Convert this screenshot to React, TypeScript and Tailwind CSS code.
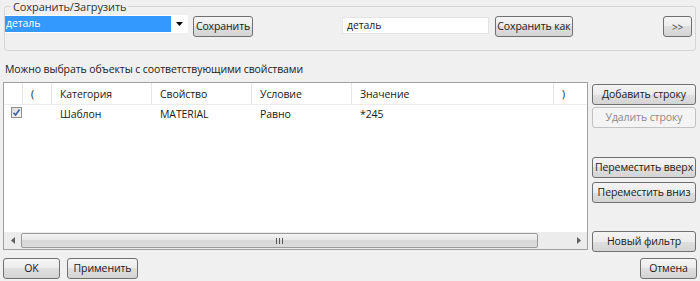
import React from "react";

const btn =
    "flex items-center justify-center whitespace-nowrap h-[21px] border border-[#707070] rounded-[3px] bg-[linear-gradient(#f4f4f4_0%,#ececec_50%,#dfdfdf_50%,#d4d4d4_100%)] text-[#1a1a1a] leading-none";

const columns = [
    { w: "w-[19px]", label: "" },
    { w: "w-[29px]", label: "(" },
    { w: "w-[100px]", label: "Категория" },
    { w: "w-[100px]", label: "Свойство" },
    { w: "w-[100px]", label: "Условие" },
    { w: "w-[202px]", label: "Значение" },
    { w: "w-[33px]", label: ")" },
];

const CheckBox = () => (
    <div className="w-[11px] h-[11px] border border-[#8f8f8f] bg-[linear-gradient(135deg,#dcdcdc,#f6f6f6)] flex items-center justify-center">
        <svg width="9" height="9" viewBox="0 0 9 9">
            <path d="M1.5 4.8 L3.6 7 L7.5 1.5" stroke="#3b5ea8" strokeWidth="1.6" fill="none" />
        </svg>
    </div>
);

const App = () => {
    return (
        <div className="w-[700px] h-[281px] bg-[#f0f0f0] overflow-hidden text-[10.5px] tracking-[-0.1px] text-[#1a1a1a] font-['Open_Sans',sans-serif]">
            <fieldset className="mx-[4px] w-[692px] h-[51px] border border-[#d5d5d5] rounded-[3px]">
                <legend className="ml-[6px] px-[2px] leading-[13px] text-[11px] text-[#333]">Сохранить/Загрузить</legend>
                <div className="flex items-start mt-[2px]">
                    <div className="w-[183px] h-[18px] bg-white flex items-center">
                        <div className="w-[166px] h-[16px] bg-[#3399ff] text-white flex items-center pl-[1px]">деталь</div>
                        <div className="flex-1 flex items-center justify-center">
                            <svg width="7" height="4" viewBox="0 0 7 4">
                                <path d="M0 0 L7 0 L3.5 4 Z" fill="#000" />
                            </svg>
                        </div>
                    </div>
                    <button className={`${btn} ml-[5px] mt-[1px] w-[60px]`}>Сохранить</button>
                    <div className="ml-[89px] mt-[2px] w-[147px] h-[17px] bg-white border border-[#e3e3e3] flex items-center pl-[4px]">деталь</div>
                    <button className={`${btn} ml-[6px] mt-[1px] w-[78px]`}>Сохранить как</button>
                    <button className={`${btn} ml-[90px] mt-[1px] w-[29px] text-[10px] text-[#444]`}>&gt;&gt;</button>
                </div>
            </fieldset>

            <div className="h-[31px] pt-[10px] pl-[5px] leading-[16px]">Можно выбрать объекты с соответствующими свойствами</div>

            <div className="flex h-[171px]">
                <div className="ml-[3px] w-[585px] h-[168px] border border-[#a0a0a0] bg-white flex flex-col">
                    <div className="flex h-[22px] border-b border-[#ececec]">
                        {columns.map((c, i) => (
                            <div key={i} className={`${c.w} h-full flex items-center pl-[8px] pt-[2px] ${i < columns.length - 1 ? "border-r border-[#e3e6ea]" : ""}`}>
                                {c.label}
                            </div>
                        ))}
                    </div>
                    <div className="flex h-[19px] items-center">
                        <div className="w-[19px] h-full flex items-start pt-[2px] pl-[7px]">
                            <CheckBox />
                        </div>
                        <div className="w-[29px]"></div>
                        <div className="w-[100px] pl-[8px]">Шаблон</div>
                        <div className="w-[100px] pl-[8px]">MATERIAL</div>
                        <div className="w-[100px] pl-[8px]">Равно</div>
                        <div className="w-[202px] pl-[8px]">*245</div>
                    </div>
                    <div className="flex-1"></div>
                    <div className="flex h-[17px] bg-[#ececec]">
                        <div className="w-[17px] flex items-center justify-center">
                            <svg width="4" height="7" viewBox="0 0 4 7">
                                <path d="M4 0 L0 3.5 L4 7 Z" fill="#606060" />
                            </svg>
                        </div>
                        <div className="flex-1 py-[1px]">
                            <div className="w-[517px] h-full border border-[#9a9a9a] rounded-[2px] bg-[linear-gradient(#f4f4f4,#e6e6e6_50%,#d8d8d8_50%,#dcdcdc)] flex items-center justify-center">
                                <div className="flex gap-[2px]">
                                    <div className="w-[1px] h-[6px] bg-[#555]"></div>
                                    <div className="w-[1px] h-[6px] bg-[#555]"></div>
                                    <div className="w-[1px] h-[6px] bg-[#555]"></div>
                                </div>
                            </div>
                        </div>
                        <div className="w-[17px] flex items-center justify-center">
                            <svg width="4" height="7" viewBox="0 0 4 7">
                                <path d="M0 0 L4 3.5 L0 7 Z" fill="#606060" />
                            </svg>
                        </div>
                    </div>
                </div>

                <div className="ml-[4px] w-[104px] flex flex-col">
                    <button className={`${btn} mt-[2px] w-full border-[#3c3c3c]`}>Добавить строку</button>
                    <button className="mt-[2px] w-full h-[21px] flex items-center justify-center whitespace-nowrap border border-[#c2c2c2] rounded-[3px] bg-[#f4f4f4] text-[#8a8a8a] leading-none">Удалить строку</button>
                    <button className={`${btn} mt-[29px] w-full`}>Переместить вверх</button>
                    <button className={`${btn} mt-[4px] w-full`}>Переместить вниз</button>
                    <button className={`${btn} mt-[28px] w-full`}>Новый фильтр</button>
                </div>
            </div>

            <div className="flex mt-[5px]">
                <button className={`${btn} ml-[3px] w-[57px]`}>OK</button>
                <button className={`${btn} ml-[7px] w-[71px]`}>Применить</button>
                <button className={`${btn} ml-auto mr-[3px] w-[57px]`}>Отмена</button>
            </div>
        </div>
    );
};

export default App;
